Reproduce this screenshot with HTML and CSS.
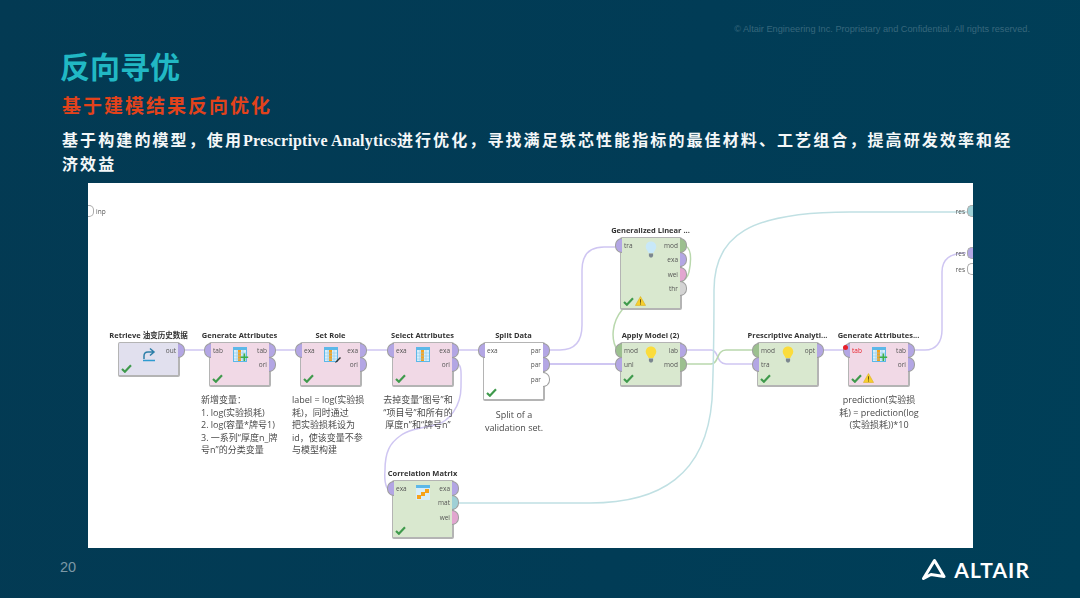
FILE: index.html
```html
<!DOCTYPE html>
<html lang="zh">
<head>
  <meta charset="UTF-8" />
  <title>反向寻优</title>
  <link rel="stylesheet" href="styles.css">
</head>
<body>
  <svg class="defs" width="0" height="0">
    <symbol id="check" viewBox="0 0 12 10">
      <path d="M1 5.500 4.200 8.600 11 1.400" fill="none" stroke="#3f9a4c" stroke-width="2.400"/>
    </symbol>
    <symbol id="warn" viewBox="0 0 12 11">
      <path d="M6 .6 11.600 10.400H.4Z" fill="#f7cf2e" stroke="#d9ae1c" stroke-width=".6"/>
      <path d="M6 3.600V7.400M6 8.200V9.400" stroke="#5b4a10" stroke-width="1"/>
    </symbol>
    <symbol id="table" viewBox="0 0 14 15">
      <rect width="14" height="15" fill="#5db8e8"/>
      <path d="M1 3H13V14H1Z" fill="#d8eefa"/>
      <path d="M5 3H8V14H5Z" fill="#f6a21c"/>
      <path d="M1 6H13M1 9H13M1 12H13M4 3V14M10 3V14" stroke="#8ccbee" stroke-width=".6" fill="none"/>
    </symbol>
    <symbol id="bulb" viewBox="0 0 12 17">
      <path d="M6 .5C9 .5 11.300 2.700 11.300 5.800 11.300 8.400 9 10 8.400 12H3.600C3 10 .7 8.400 .7 5.800.7 2.700 3 .5 6 .5Z"/>
      <path d="M3.900 12.600H8.100V15L7 16.500H5L3.900 15Z" fill="#7c8790"/>
    </symbol>
  </svg>

  <div class="slide">
    <p class="copyright">© Altair Engineering Inc. Proprietary and Confidential. All rights reserved.</p>
    <h1>反向寻优</h1>
    <h2>基于建模结果反向优化</h2>
    <p class="desc">基于构建的模型，使用<span class="latin">Prescriptive Analytics</span>进行优化，寻找满足铁芯性能指标的最佳材料、工艺组合，提高研发效率和经济效益</p>

    <div class="process">
      <svg class="wires" viewBox="88 183 885 365" width="885" height="365">
        <g class="wire purple">
          <path d="M184 350H205M276 350H296M367 350H388M458 350H479M820 350H844"/>
          <path d="M458 364C462 366 461 375 461 387 461 405 450 422 435 425 420 428 408 430 400 436 390 443 385 452 385 470 384 482 386 490 392 492"/>
          <path d="M549 350H560C576 350 582 340 582 325V270C582 254 590 247 604 247H616"/>
          <path class="thick" d="M549 364H616"/>
          <path d="M686 350H711C719 350 716 364 726 364H753"/>
          <path d="M915 350H925C936 350 942 342 942 330V272C942 259 950 253 966 253"/>
        </g>
        <g class="wire green">
          <path d="M686 246C692 250 691 262 689 272 686 290 640 296 622 310 612 322 610 340 618 351"/>
          <path d="M686 364H711C719 364 716 350 726 350H753"/>
        </g>
        <path class="wire teal" d="M458 503H590C660 503 706 475 712 400 713 380 714 340 714 290 714 235 750 212 850 212H969"/>
      </svg>

      <span class="edge inp">inp</span>
      <span class="edge res res1">res</span>
      <span class="edge res res2">res</span>
      <span class="edge res res3">res</span>

      <div class="node blue n-retrieve">
        <div class="node-title">Retrieve 油变历史数据</div>
        <div class="ports out"><span class="port purple">out</span></div>
        <svg class="op-icon" viewBox="0 0 14 15"><path d="M2 12V9C2 6 4 5 6 5H11M8 1.500 12 5 8 8.500" fill="none" stroke="#2e7fa8" stroke-width="1.500"/><path d="M1 13.500H13" stroke="#2e9bd0" stroke-width="1.500"/></svg>
        <div class="status"><svg class="check"><use href="#check"/></svg></div>
      </div>

      <div class="node pink n-gen1">
        <div class="node-title">Generate Attributes</div>
        <div class="ports in"><span class="port purple">tab</span></div>
        <div class="ports out"><span class="port purple">tab</span><span class="port purple">ori</span></div>
        <svg class="op-icon"><use href="#table"/></svg>
        <span class="plus">+</span>
        <div class="status"><svg class="check"><use href="#check"/></svg></div>
      </div>

      <div class="node pink n-role">
        <div class="node-title">Set Role</div>
        <div class="ports in"><span class="port purple">exa</span></div>
        <div class="ports out"><span class="port purple">exa</span><span class="port purple">ori</span></div>
        <svg class="op-icon"><use href="#table"/></svg>
        <svg class="pencil" viewBox="0 0 8 8"><path d="M1 7 2 5 6 1 7 2 3 6Z" fill="#333"/></svg>
        <div class="status"><svg class="check"><use href="#check"/></svg></div>
      </div>

      <div class="node pink n-select">
        <div class="node-title">Select Attributes</div>
        <div class="ports in"><span class="port purple">exa</span></div>
        <div class="ports out"><span class="port purple">exa</span><span class="port purple">ori</span></div>
        <svg class="op-icon"><use href="#table"/></svg>
        <div class="status"><svg class="check"><use href="#check"/></svg></div>
      </div>

      <div class="node white n-split">
        <div class="node-title">Split Data</div>
        <div class="ports in"><span class="port purple">exa</span></div>
        <div class="ports out"><span class="port purple">par</span><span class="port purple">par</span><span class="port empty">par</span></div>
        <div class="status"><svg class="check"><use href="#check"/></svg></div>
      </div>

      <div class="node green n-glm">
        <div class="node-title">Generalized Linear ...</div>
        <div class="ports in"><span class="port purple">tra</span></div>
        <div class="ports out"><span class="port green">mod</span><span class="port purple">exa</span><span class="port pinkish">wei</span><span class="port grey">thr</span></div>
        <svg class="op-icon bulb pale"><use href="#bulb"/></svg>
        <div class="status"><svg class="check"><use href="#check"/></svg><svg class="warn"><use href="#warn"/></svg></div>
      </div>

      <div class="node green n-apply">
        <div class="node-title">Apply Model (2)</div>
        <div class="ports in"><span class="port green">mod</span><span class="port purple">unl</span></div>
        <div class="ports out"><span class="port purple">lab</span><span class="port green">mod</span></div>
        <svg class="op-icon bulb"><use href="#bulb"/></svg>
        <div class="status"><svg class="check"><use href="#check"/></svg></div>
      </div>

      <div class="node green n-presc">
        <div class="node-title">Prescriptive Analyti...</div>
        <div class="ports in"><span class="port green">mod</span><span class="port purple">tra</span></div>
        <div class="ports out"><span class="port purple">opt</span></div>
        <svg class="op-icon bulb"><use href="#bulb"/></svg>
        <div class="status"><svg class="check"><use href="#check"/></svg></div>
      </div>

      <div class="node pink n-gen2">
        <div class="node-title">Generate Attributes...</div>
        <div class="ports in"><span class="port purple error">tab</span></div>
        <div class="ports out"><span class="port purple">tab</span><span class="port purple">ori</span></div>
        <svg class="op-icon"><use href="#table"/></svg>
        <span class="plus">+</span>
        <div class="status"><svg class="check"><use href="#check"/></svg><svg class="warn"><use href="#warn"/></svg></div>
      </div>

      <div class="node green n-corr">
        <div class="node-title">Correlation Matrix</div>
        <div class="ports in"><span class="port purple">exa</span></div>
        <div class="ports out"><span class="port purple">exa</span><span class="port teal">mat</span><span class="port pinkish">wei</span></div>
        <svg class="op-icon" viewBox="0 0 14 15"><rect width="14" height="15" fill="#d8eefa"/><path d="M0 0H14V3H0Z" fill="#5db8e8"/><path d="M1 14V10H5V7H9V4H13V8H9V11H5V14Z" fill="#f6a21c"/></svg>
        <div class="status"><svg class="check"><use href="#check"/></svg></div>
      </div>

      <p class="note note-gen1">新增变量：<br>1. log(实验损耗)<br>2. log(容量*牌号1)<br>3. 一系列“厚度n_牌<br>号n”的分类变量</p>
      <p class="note note-role">label = log(实验损<br>耗)，同时通过<br>把实验损耗设为<br>id，使该变量不参<br>与模型构建</p>
      <p class="note center note-select">去掉变量“图号”和<br>“项目号”和所有的<br>厚度n”和“牌号n”</p>
      <p class="note center note-split">Split of a<br>validation set.</p>
      <p class="note center note-gen2">prediction(实验损<br>耗) = prediction(log<br>(实验损耗))*10</p>
    </div>

    <footer>
      <span class="page-no">20</span>
      <div class="logo">
        <svg viewBox="0 0 25 23" width="25" height="23"><path d="M13.500 2.500 23 18.500 10 16.500 2.500 20.500Z" fill="none" stroke="#fff" stroke-width="3" stroke-linejoin="round"/></svg>
        <span>ALTAIR</span>
      </div>
    </footer>
  </div>
</body>
</html>
```

FILE: styles.css
```css
* {
  box-sizing: border-box;
}

body {
  margin: 0;
  overflow: hidden;
  background: #013c56;
  font-family: "Liberation Serif", "Noto Sans CJK SC", serif;
}

.defs {
  position: absolute;
}

.slide {
  width: 1080px;
  height: 598px;
  padding-top: 23px;
  display: flex;
  flex-direction: column;
  background: linear-gradient(100deg, #033a53 0%, #013c56 60%, #003f58 100%);
}

.copyright {
  margin: 0 50px 0 0;
  text-align: right;
  font: 9.2px/13px "Liberation Sans", sans-serif;
  color: #37677c;
}

h1 {
  margin: 8px 0 0 60px;
  font: 700 30px/42px "Noto Sans CJK SC", sans-serif;
  color: #21b8c4;
}

h2 {
  margin: 6px 0 0 62px;
  font: 700 19px/26px "Noto Sans CJK SC", serif;
  letter-spacing: 2px;
  color: #e2421b;
}

.desc {
  margin: 11px 60px 0 62px;
  font-size: 16px;
  line-height: 23.5px;
  font-weight: 700;
  letter-spacing: 2.1px;
  color: #f4f7f8;
}

.desc .latin {
  letter-spacing: 0.2px;
}

/* process canvas */
.process {
  position: relative;
  flex: none;
  width: 885px;
  height: 365px;
  margin: 7px 0 0 88px;
  background: #fff;
  overflow: hidden;
  font-family: "Open Sans", "Noto Sans CJK SC", sans-serif;
  filter: blur(0.35px);
}

.wires {
  position: absolute;
  left: 0;
  top: 0;
}

.wire {
  fill: none;
  stroke-width: 1.5;
}

.wire.purple { stroke: #cfc6f2; }
.wire.green { stroke: #b9d8ad; }
.wire.teal { stroke: #c0e0e3; }
.wire .thick { stroke-width: 2.2; }

.node {
  position: absolute;
  width: 62px;
  border: 1px solid #b4b4b4;
  border-width: 1px 2px 2px 1px;
  border-radius: 2px;
}

.node.blue { background: #e1e0ee; }
.node.pink { background: #f1d9e6; }
.node.white { background: #fff; }
.node.green { background: #d9e8cf; }

.n-retrieve { left: 30px; top: 159px; height: 35px; }
.n-gen1 { left: 121px; top: 159px; height: 45px; }
.n-role { left: 212px; top: 159px; height: 45px; }
.n-select { left: 304px; top: 159px; height: 45px; }
.n-split { left: 395px; top: 159px; height: 59px; }
.n-glm { left: 532px; top: 54px; height: 73px; }
.n-apply { left: 532px; top: 159px; height: 45px; }
.n-presc { left: 669px; top: 159px; height: 45px; }
.n-gen2 { left: 760px; top: 159px; height: 45px; }
.n-corr { left: 304px; top: 297px; height: 59px; }

.node-title {
  position: absolute;
  left: -20px;
  right: -20px;
  top: -13px;
  text-align: center;
  font-size: 7.5px;
  line-height: 10px;
  font-weight: 700;
  color: #333;
  white-space: nowrap;
}

.ports {
  position: absolute;
  top: 1.5px;
  display: flex;
  flex-direction: column;
  gap: 2.3px;
}

.ports.in { left: -6px; align-items: flex-start; }
.ports.out { right: -7px; align-items: flex-end; }

.port {
  height: 12px;
  display: flex;
  align-items: center;
  gap: 2px;
  font-size: 6.5px;
  color: #555;
}

.port::before,
.port::after {
  width: 6px;
  height: 13px;
  background: var(--port);
  border: 1px solid var(--port-line);
}

.ports.in .port::before {
  content: "";
  border-radius: 7px 0 0 7px;
  border-right: 0;
}

.ports.out .port::after {
  content: "";
  border-radius: 0 7px 7px 0;
  border-left: 0;
}

.port.purple { --port: #b3a6e4; --port-line: #9e9e9e; }
.port.green { --port: #9cc08f; --port-line: #9e9e9e; }
.port.pinkish { --port: #e2a6d0; --port-line: #9e9e9e; }
.port.grey { --port: #d4d4d4; --port-line: #9e9e9e; }
.port.teal { --port: #9fd0d6; --port-line: #9e9e9e; }
.port.empty { --port: #fff; --port-line: #9e9e9e; }

.port.error {
  color: #e8202a;
  position: relative;
}

.port.error::after {
  content: "";
  position: absolute;
  left: 0;
  top: 0;
  width: 5px;
  height: 5px;
  background: #e8202a;
  border: 0;
  border-radius: 50%;
}

.op-icon {
  position: absolute;
  left: 23px;
  top: 4px;
  width: 14px;
  height: 15px;
}

.op-icon.bulb {
  fill: #fbdc3c;
  top: 3px;
  width: 12px;
  height: 17px;
  left: 24px;
}

.op-icon.bulb.pale {
  fill: #c8e8f8;
}

.plus {
  position: absolute;
  left: 30px;
  top: 6px;
  font: 700 15px/15px "Liberation Sans", sans-serif;
  color: #3cb04a;
}

.pencil {
  position: absolute;
  left: 33px;
  top: 13px;
  width: 8px;
  height: 8px;
}

.status {
  position: absolute;
  left: 2px;
  bottom: 2px;
  display: flex;
  align-items: center;
  gap: 1px;
}

.check {
  width: 11px;
  height: 9px;
}

.warn {
  width: 11px;
  height: 10px;
}

.edge {
  position: absolute;
  display: flex;
  align-items: center;
  gap: 2px;
  height: 10px;
  font-size: 6.5px;
  color: #555;
}

.edge::before,
.edge::after {
  width: 5px;
  height: 10px;
  border: 1px solid #aaa;
}

.edge.inp { left: 0; top: 23px; }
.edge.inp::before {
  content: "";
  background: #fff;
  border-left: 0;
  border-radius: 0 5px 5px 0;
}

.edge.res { right: 0; }
.edge.res::after {
  content: "";
  border-right: 0;
  border-radius: 5px 0 0 5px;
}

.res1 { top: 23px; }
.res2 { top: 65px; }
.res3 { top: 81px; }
.res1::after { background: #9fd0d6; }
.res2::after { background: #b3a6e4; }
.res3::after { background: #fff; }

.note {
  position: absolute;
  margin: 0;
  font-size: 9px;
  line-height: 12.5px;
  color: #4a4a4a;
  white-space: nowrap;
}

.note.center { text-align: center; }
.note-gen1 { left: 113px; top: 211px; }
.note-role { left: 204px; top: 211px; }
.note-select { left: 290px; top: 211px; width: 80px; }
.note-split { left: 395px; top: 226px; width: 62px; }
.note-gen2 { left: 741px; top: 211px; width: 100px; }

footer {
  flex: 1;
  display: flex;
  justify-content: space-between;
  align-items: center;
  padding: 0 50px 12px 60px;
}

.page-no {
  font: 14.5px "Liberation Sans", sans-serif;
  color: #7c98a6;
}

.logo {
  display: flex;
  align-items: center;
  gap: 8px;
  margin: 5px 0 0 0;
  color: #fff;
  font: 700 21px/24px Lato, sans-serif;
  letter-spacing: 1.1px;
}
```
